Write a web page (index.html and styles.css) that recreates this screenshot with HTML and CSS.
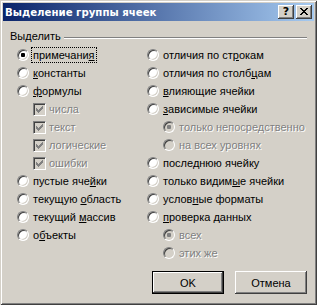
FILE: index.html
```html
<!DOCTYPE html>
<html lang="ru">
<head>
  <meta charset="UTF-8" />
  <title>Выделение группы ячеек</title>
  <link rel="stylesheet" href="styles.css">
</head>
<body>
  <div class="window">
    <div class="titlebar">
      <span class="title">Выделение группы ячеек</span>
      <div class="caption-buttons">
        <div class="cap-btn help">?</div>
        <div class="cap-btn">
          <svg width="8" height="7" viewBox="0 0 8 7"><path d="M0 0h2v1h-2zM6 0h2v1h-2zM1 1h2v1h-2zM5 1h2v1h-2zM2 2h4v1h-4zM3 3h2v1h-2zM2 4h4v1h-4zM1 5h2v1h-2zM5 5h2v1h-2zM0 6h2v1h-2zM6 6h2v1h-2z" fill="#000"/></svg>
        </div>
      </div>
    </div>

    <div class="content">
      <div class="group-head">
        <span>Выделить</span>
        <span class="etched"></span>
      </div>

      <div class="columns">
        <div class="col">
          <div class="row"><span class="radio checked"></span><span class="label focus">примечани<u>я</u></span></div>
          <div class="row"><span class="radio"></span><span class="label"><u>к</u>онстанты</span></div>
          <div class="row"><span class="radio"></span><span class="label"><u>ф</u>ормулы</span></div>
          <div class="row sub"><span class="check"><svg width="7" height="7" viewBox="0 0 7 7"><path d="M6 0h1v1h-1zM5 1h2v1h-2zM0 2h1v1h-1zM4 2h3v1h-3zM0 3h2v1h-2zM3 3h3v1h-3zM0 4h5v1h-5zM1 5h3v1h-3zM2 6h1v1h-1z" fill="#808080"/></svg></span><span class="label off">числа</span></div>
          <div class="row sub"><span class="check"><svg width="7" height="7" viewBox="0 0 7 7"><path d="M6 0h1v1h-1zM5 1h2v1h-2zM0 2h1v1h-1zM4 2h3v1h-3zM0 3h2v1h-2zM3 3h3v1h-3zM0 4h5v1h-5zM1 5h3v1h-3zM2 6h1v1h-1z" fill="#808080"/></svg></span><span class="label off">текст</span></div>
          <div class="row sub"><span class="check"><svg width="7" height="7" viewBox="0 0 7 7"><path d="M6 0h1v1h-1zM5 1h2v1h-2zM0 2h1v1h-1zM4 2h3v1h-3zM0 3h2v1h-2zM3 3h3v1h-3zM0 4h5v1h-5zM1 5h3v1h-3zM2 6h1v1h-1z" fill="#808080"/></svg></span><span class="label off">логические</span></div>
          <div class="row sub"><span class="check"><svg width="7" height="7" viewBox="0 0 7 7"><path d="M6 0h1v1h-1zM5 1h2v1h-2zM0 2h1v1h-1zM4 2h3v1h-3zM0 3h2v1h-2zM3 3h3v1h-3zM0 4h5v1h-5zM1 5h3v1h-3zM2 6h1v1h-1z" fill="#808080"/></svg></span><span class="label off">ошибки</span></div>
          <div class="row"><span class="radio"></span><span class="label">пустые яче<u>й</u>ки</span></div>
          <div class="row"><span class="radio"></span><span class="label">текущую <u>о</u>бласть</span></div>
          <div class="row"><span class="radio"></span><span class="label">текущий <u>м</u>ассив</span></div>
          <div class="row"><span class="radio"></span><span class="label">о<u>б</u>ъекты</span></div>
        </div>

        <div class="col">
          <div class="row"><span class="radio"></span><span class="label">отличия по ст<u>р</u>окам</span></div>
          <div class="row"><span class="radio"></span><span class="label">отличия по столб<u>ц</u>ам</span></div>
          <div class="row"><span class="radio"></span><span class="label"><u>в</u>лияющие ячейки</span></div>
          <div class="row"><span class="radio"></span><span class="label"><u>з</u>ависимые ячейки</span></div>
          <div class="row sub"><span class="radio checked disabled"></span><span class="label off">только непосредственно</span></div>
          <div class="row sub"><span class="radio disabled"></span><span class="label off">на всех уровнях</span></div>
          <div class="row"><span class="radio"></span><span class="label">после<u>д</u>нюю ячейку</span></div>
          <div class="row"><span class="radio"></span><span class="label">только видим<u>ы</u>е ячейки</span></div>
          <div class="row"><span class="radio"></span><span class="label">услов<u>н</u>ые форматы</span></div>
          <div class="row"><span class="radio"></span><span class="label"><u>п</u>роверка данных</span></div>
          <div class="row sub"><span class="radio checked disabled"></span><span class="label off">всех</span></div>
          <div class="row sub"><span class="radio disabled"></span><span class="label off">этих же</span></div>
        </div>
      </div>

      <div class="actions">
        <div class="btn default"><span>OK</span></div>
        <div class="btn">Отмена</div>
      </div>
    </div>
  </div>
</body>
</html>
```

FILE: styles.css
```css
* { margin: 0; padding: 0; box-sizing: border-box; }

html, body {
  width: 317px;
  height: 305px;
  background: #d4d0c8;
  font-family: 'Liberation Sans', Arial, sans-serif;
  font-size: 11px;
  color: #000;
  overflow: hidden;
}

.window {
  width: 317px;
  height: 305px;
  padding: 3px;
  background: #d4d0c8;
  box-shadow: inset 1px 1px #d4d0c8, inset -1px -1px #404040,
              inset 2px 2px #fff, inset -2px -2px #808080;
  display: flex;
  flex-direction: column;
}

/* заголовок */
.titlebar {
  height: 18px;
  display: flex;
  align-items: center;
  justify-content: space-between;
  padding: 0 2px;
  background: linear-gradient(to right, #0a246a, #a6caf0);
}

.title {
  font-family: 'DejaVu Sans', sans-serif;
  font-weight: bold;
  font-size: 10.2px;
  color: #fff;
  white-space: nowrap;
}

.caption-buttons {
  display: flex;
  gap: 2px;
}

.cap-btn {
  width: 16px;
  height: 14px;
  background: #d4d0c8;
  box-shadow: inset -1px -1px #404040, inset 1px 1px #fff,
              inset -2px -2px #808080, inset 2px 2px #d4d0c8;
  display: flex;
  align-items: center;
  justify-content: center;
  padding-bottom: 1px;
}

.cap-btn.help {
  font-family: 'DejaVu Sans', sans-serif;
  font-weight: bold;
  font-size: 11px;
  line-height: 12px;
}

/* группа */
.content {
  flex: 1;
  padding: 8px 7px 0;
  display: flex;
  flex-direction: column;
}

.group-head {
  display: flex;
  align-items: center;
  gap: 3px;
  height: 14px;
  white-space: nowrap;
}

.etched {
  flex: 1;
  height: 2px;
  margin-top: 4px;
  border-top: 1px solid #808080;
  border-bottom: 1px solid #fff;
}

.columns {
  display: grid;
  grid-template-columns: 130px 1fr;
  padding: 3px 0 0 7px;
}

.row {
  display: flex;
  align-items: center;
  height: 18px;
  white-space: nowrap;
}

.row.sub {
  padding-left: 16px;
}

.radio {
  width: 12px;
  height: 12px;
  flex: none;
  margin-right: 4px;
  border-radius: 50%;
  border: 1px solid;
  border-color: #808080 #fff #fff #808080;
  background: #fff;
  box-shadow: inset 1px 1px #404040, inset -1px -1px #d4d0c8;
  display: flex;
  align-items: center;
  justify-content: center;
}

.radio.checked::after {
  content: "";
  width: 4px;
  height: 4px;
  border-radius: 1px;
  background: #000;
}

.radio.disabled {
  background: #d4d0c8;
}

.radio.disabled.checked::after {
  background: #808080;
}

.check {
  width: 13px;
  height: 13px;
  flex: none;
  margin-right: 3px;
  border: 1px solid;
  border-color: #808080 #fff #fff #808080;
  background: #d4d0c8;
  box-shadow: inset 1px 1px #404040, inset -1px -1px #d4d0c8;
  display: flex;
  align-items: center;
  justify-content: center;
}

.check svg { display: block; }

.label u { text-decoration: underline; }

.label.focus {
  outline: 1px dotted #000;
  outline-offset: 1px;
}

.label.off {
  color: #808080;
  text-shadow: 1px 1px 0 #fff;
}

/* кнопки */
.actions {
  display: flex;
  justify-content: flex-end;
  gap: 11px;
  margin-top: 9px;
}

.btn {
  width: 72px;
  height: 23px;
  display: flex;
  align-items: center;
  justify-content: center;
  background: #d4d0c8;
  box-shadow: inset -1px -1px #404040, inset 1px 1px #fff,
              inset -2px -2px #808080, inset 2px 2px #d4d0c8;
}

.btn.default {
  border: 1px solid #000;
  box-shadow: inset -1px -1px #404040, inset 1px 1px #fff,
              inset -2px -2px #808080;
}
```
